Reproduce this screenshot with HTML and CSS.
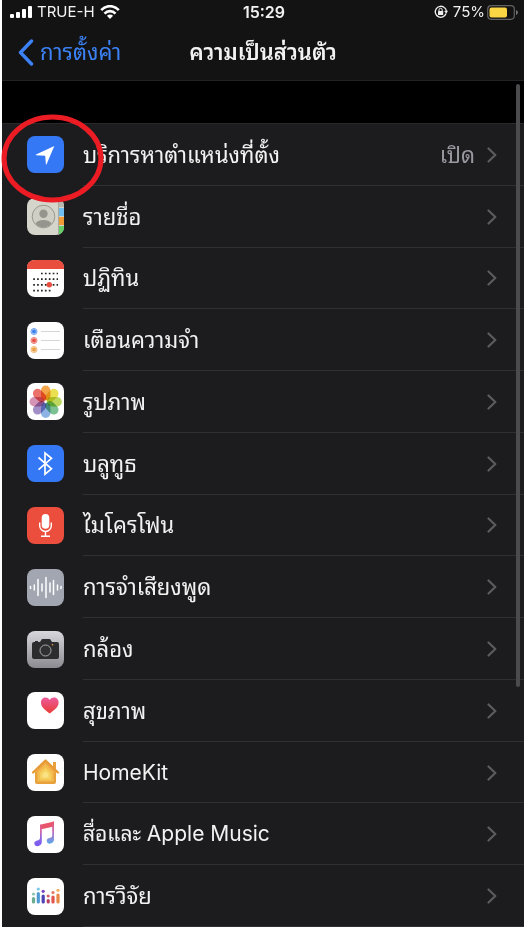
FILE: index.html
```html
<!DOCTYPE html>
<html lang="th">
<head>
<meta charset="utf-8">
<meta name="viewport" content="width=device-width, initial-scale=1">
<title>ความเป็นส่วนตัว</title>
<link rel="stylesheet" href="styles.css">
</head>
<body>
<svg class="defs" width="0" height="0" aria-hidden="true">
  <defs>
    <linearGradient id="camera-bg" x1="0" y1="0" x2="0" y2="1"><stop offset="0" stop-color="#d8d7dc"/><stop offset="1" stop-color="#8c8b91"/></linearGradient>
    <linearGradient id="heart" x1="0" y1="0" x2="0" y2="1"><stop offset="0" stop-color="#ee5a9c"/><stop offset="1" stop-color="#e83c35"/></linearGradient>
    <linearGradient id="music" gradientUnits="userSpaceOnUse" x1="20" y1="6" x2="16" y2="30"><stop offset="0" stop-color="#ea5468"/><stop offset=".4" stop-color="#d765a8"/><stop offset=".75" stop-color="#8565e8"/><stop offset="1" stop-color="#7a5cf0"/></linearGradient>
    <linearGradient id="music-right" gradientUnits="userSpaceOnUse" x1="24" y1="6" x2="24" y2="28"><stop offset="0" stop-color="#ea5468"/><stop offset=".45" stop-color="#c470c0"/><stop offset="1" stop-color="#55a8ee"/></linearGradient>
    <symbol id="chevron" viewBox="0 0 10 16"><path d="M1.500 1.500 8.300 8 1.500 14.500" fill="none" stroke="currentColor" stroke-width="2.200" stroke-linecap="round" stroke-linejoin="round"/></symbol>
  </defs>
</svg>
<div class="screen">
  <header class="header">
    <div class="status">
      <div class="carrier">
        <svg width="22" height="12" viewBox="0 0 22 12" aria-hidden="true"><g fill="#fff"><rect x="0" y="8" width="4" height="4" rx="1"/><rect x="6" y="6" width="4" height="6" rx="1"/><rect x="12" y="3" width="4" height="9" rx="1"/><rect x="18" y="0" width="4" height="12" rx="1"/></g></svg>
        <span>TRUE-H</span>
        <svg width="20" height="14" viewBox="0 0 20 14" aria-hidden="true"><g fill="none" stroke="#fff" stroke-width="2.600"><path d="M1.200 5.200C6-.2 14-.2 18.800 5.200"/><path d="M4.500 8.600C7.600 5.300 12.400 5.300 15.500 8.600"/></g><path d="M6.900 10.800Q10 8 13.100 10.800L10 14Z" fill="#fff"/></svg>
      </div>
      <time class="time">15:29</time>
      <div class="power">
        <svg width="14" height="14" viewBox="0 0 14 14" aria-hidden="true"><path d="M10.600 2.800A5.500 5.500 0 1 0 12 8.500" fill="none" stroke="#eee" stroke-width="1.300"/><path d="M10.600 2.800Q12.200 4.200 12.300 6" fill="none" stroke="#eee" stroke-width="1.300"/><path d="m10.200 6 3.800-.2-1.700 3z" fill="#eee"/><rect x="4" y="6" width="5.200" height="4" rx=".6" fill="#eee"/><path d="M5 6.200V4.900a1.600 1.600 0 0 1 3.200 0v1.300" fill="none" stroke="#eee"/></svg>
        <span class="percent">75%</span>
        <svg width="31" height="15" viewBox="0 0 31 15" aria-hidden="true"><rect x=".7" y=".7" width="26.600" height="13.600" rx="3.500" fill="none" stroke="#626262" stroke-width="1.200"/><rect x="2.500" y="2.500" width="17.500" height="10" rx="2" fill="#fbd644"/><path d="M29 5q2 .8 2 2.500T29 10z" fill="#727272"/></svg>
      </div>
    </div>
    <nav class="nav">
      <a class="back" href="#settings"><svg width="16" height="27" viewBox="0 0 16 27" aria-hidden="true"><path d="M13.500 2 2.500 13.500 13.500 25" fill="none" stroke="currentColor" stroke-width="3.400" stroke-linecap="round" stroke-linejoin="round"/></svg><span>การตั้งค่า</span></a>
      <h1 class="title">ความเป็นส่วนตัว</h1>
    </nav>
  </header>
  <main class="content">
    <ul class="list">
      <li class="row">
        <a class="link" href="#location">
          <svg class="icon" viewBox="0 0 37 37" aria-hidden="true"><rect width="37" height="37" rx="8" fill="#3478f6"/><path d="M27.300 10 19.600 28.200Q19.200 29 18.900 28.200L18.200 19.800 9.200 19.200Q8.300 19 9 18.500Z" fill="#fff"/></svg>
          <span class="label">บริการหาตำแหน่งที่ตั้ง</span><span class="value">เปิด</span>
          <svg class="chevron"><use href="#chevron"/></svg>
        </a>
        <svg class="marker" viewBox="0 0 102 88" aria-hidden="true"><ellipse cx="51" cy="44" rx="48" ry="41" fill="none" stroke="#ec1c24" stroke-width="5"/></svg>
      </li>
      <li class="row"><a class="link" href="#contacts">
        <svg class="icon" viewBox="0 0 37 37" aria-hidden="true"><rect width="37" height="37" rx="8" fill="#d6d5cb"/><path d="M32 .6Q37 2.500 37 8V9H32Z" fill="#b8b8ae"/><path d="M32 10h5v8h-5z" fill="#70bdf0"/><path d="M32 19h5v8h-5z" fill="#f09a38"/><path d="M32 28h5v1q0 5.500-5 7.400z" fill="#68ce67"/><path d="M31.500 .6v35.800" stroke="#aaa99f"/><circle cx="16.500" cy="18.500" r="11.300" fill="#d0cfc5" stroke="#99988f"/><circle cx="16.500" cy="15.700" r="4.200" fill="#96958d"/><path d="M8.500 25.500Q10.500 22 16.500 22t8 3.500Q21.500 29.300 16.500 29.300T8.500 25.500Z" fill="#96958d"/></svg>
        <span class="label">รายชื่อ</span><svg class="chevron"><use href="#chevron"/></svg></a></li>
      <li class="row"><a class="link" href="#calendar">
        <svg class="icon" viewBox="0 0 37 37" aria-hidden="true"><rect width="37" height="37" rx="8" fill="#fff"/><path d="M0 9V8Q0 0 8 0H29Q37 0 37 8V9Z" fill="#e84d3d"/><g fill="none" stroke="#222" stroke-width="1.700" stroke-dasharray="1.700 2.200"><path d="M14 13.500H31"/><path d="M6.200 19.200H31"/><path d="M6.200 24.800H31"/><path d="M6.200 30.700H23.500"/></g><circle cx="22.300" cy="24.800" r="2.700" fill="#e84d3d"/></svg>
        <span class="label">ปฏิทิน</span><svg class="chevron"><use href="#chevron"/></svg></a></li>
      <li class="row"><a class="link" href="#reminders">
        <svg class="icon" viewBox="0 0 37 37" aria-hidden="true"><rect width="37" height="37" rx="8" fill="#fff"/><path d="M14 9.500H33M14 18.500H33M14 27.500H33" stroke="#c9cccf" stroke-width=".8"/><g fill="none" stroke-width=".8"><g stroke="#3f83ee"><circle cx="7" cy="9.500" r="3"/><circle cx="7" cy="9.500" r="1.800" fill="#3f83ee"/></g><g stroke="#e85045"><circle cx="7" cy="18.500" r="3"/><circle cx="7" cy="18.500" r="1.800" fill="#e85045"/></g><g stroke="#eea044"><circle cx="7" cy="27.500" r="3"/><circle cx="7" cy="27.500" r="1.800" fill="#eea044"/></g></g></svg>
        <span class="label">เตือนความจำ</span><svg class="chevron"><use href="#chevron"/></svg></a></li>
      <li class="row"><a class="link" href="#photos">
        <svg class="icon" viewBox="0 0 37 37" aria-hidden="true"><rect width="37" height="37" rx="8" fill="#fff"/><g class="petals"><rect x="14" y="2.500" width="9.400" height="15" rx="4.700" fill="#f29c38"/><rect x="14" y="2.500" width="9.400" height="15" rx="4.700" fill="#e8dc3c" transform="rotate(45 18.700 18.700)"/><rect x="14" y="2.500" width="9.400" height="15" rx="4.700" fill="#b7d34d" transform="rotate(90 18.700 18.700)"/><rect x="14" y="2.500" width="9.400" height="15" rx="4.700" fill="#6cba85" transform="rotate(135 18.700 18.700)"/><rect x="14" y="2.500" width="9.400" height="15" rx="4.700" fill="#80abe0" transform="rotate(180 18.700 18.700)"/><rect x="14" y="2.500" width="9.400" height="15" rx="4.700" fill="#9883c2" transform="rotate(225 18.700 18.700)"/><rect x="14" y="2.500" width="9.400" height="15" rx="4.700" fill="#d188ad" transform="rotate(270 18.700 18.700)"/><rect x="14" y="2.500" width="9.400" height="15" rx="4.700" fill="#e8625a" transform="rotate(315 18.700 18.700)"/></g></svg>
        <span class="label">รูปภาพ</span><svg class="chevron"><use href="#chevron"/></svg></a></li>
      <li class="row"><a class="link" href="#bluetooth">
        <svg class="icon" viewBox="0 0 37 37" aria-hidden="true"><rect width="37" height="37" rx="8" fill="#3478f6"/><path d="m11.500 12.500 13 11.300-6.500 5.400V8l6.500 5.300-13 11.300" fill="none" stroke="#fff" stroke-width="1.700"/></svg>
        <span class="label">บลูทูธ</span><svg class="chevron"><use href="#chevron"/></svg></a></li>
      <li class="row"><a class="link" href="#microphone">
        <svg class="icon" viewBox="0 0 37 37" aria-hidden="true"><rect width="37" height="37" rx="8" fill="#eb4e3d"/><rect x="14.700" y="7" width="7.600" height="14.700" rx="3.800" fill="#fff"/><path d="M12.700 15.500v3.200a5.800 5.800 0 0 0 11.600 0v-3.200M18.500 24.500v4.700M14 29.300h9" fill="none" stroke="#fff" stroke-width="1.400"/></svg>
        <span class="label">ไมโครโฟน</span><svg class="chevron"><use href="#chevron"/></svg></a></li>
      <li class="row"><a class="link" href="#speech">
        <svg class="icon" viewBox="0 0 37 37" aria-hidden="true"><rect width="37" height="37" rx="8" fill="#a2a6b1"/><path d="M3.500 17.500v2M7.300 16v5M11 10.500v16M15 15v7M19 8.500v20M23 14v9M26.500 11.500v14M30.500 16v5M34 17.500v2" stroke="#fff" stroke-width="1.500" stroke-linecap="round"/></svg>
        <span class="label">การจำเสียงพูด</span><svg class="chevron"><use href="#chevron"/></svg></a></li>
      <li class="row"><a class="link" href="#camera">
        <svg class="icon" viewBox="0 0 37 37" aria-hidden="true"><rect width="37" height="37" rx="8" fill="url(#camera-bg)"/><path d="M8 10h3v1h2l2-3h8l2 3h5q2 0 2 2v13q0 2-2 2H7q-2 0-2-2V13q0-2 2-2h1z" fill="#2c2c2e"/><circle cx="18.500" cy="19.500" r="5.500" fill="#303032" stroke="#b5b5b5" stroke-width=".9"/><circle cx="25.500" cy="13.700" r=".8" fill="#f2a33c"/></svg>
        <span class="label">กล้อง</span><svg class="chevron"><use href="#chevron"/></svg></a></li>
      <li class="row"><a class="link" href="#health">
        <svg class="icon" viewBox="0 0 37 37" aria-hidden="true"><rect width="37" height="37" rx="8" fill="#fff"/><path d="M22.700 21.500C17 17.300 14 14.500 14 10.500c0-5.500 6.300-6.700 8.700-2.500 2.400-4.200 8.900-3 8.900 2.500 0 4-3.200 6.800-8.900 11Z" fill="url(#heart)"/></svg>
        <span class="label">สุขภาพ</span><svg class="chevron"><use href="#chevron"/></svg></a></li>
      <li class="row"><a class="link" href="#homekit">
        <svg class="icon" viewBox="0 0 37 37" aria-hidden="true"><rect width="37" height="37" rx="8" fill="#fff"/><path d="M26 8h3v7h-3z" fill="#e9a13b"/><path d="M8 17h21v11q0 2-2 2H10q-2 0-2-2Z" fill="#e9a13b"/><path d="m6 18.500 12.500-12 12.500 12" fill="#f0a944" stroke="#e69a38" stroke-width="2.200" stroke-linejoin="round" stroke-linecap="round"/><path d="m10.500 18 8-7.800 8 7.800v9.500h-16z" fill="#f4bd52"/><path d="m13 19 5.500-5.300L24 19v6.500H13z" fill="#f6d160"/><path d="m15.500 20 3-2.800 3 2.800v3.500h-6z" fill="#f9e384"/></svg>
        <span class="label latin">HomeKit</span><svg class="chevron"><use href="#chevron"/></svg></a></li>
      <li class="row"><a class="link" href="#music">
        <svg class="icon" viewBox="0 0 37 37" aria-hidden="true"><rect width="37" height="37" rx="8" fill="#fff"/><path d="M13 8.700 27 5.500v5L13 13.500Z" fill="#e7566c"/><path d="M13 8.700h1.800V26c0 5-7.500 5.500-7.500 1.300 0-3.700 5.700-1.800 5.700-5.300Z" fill="url(#music)"/><path d="M25.200 6 27 5.500V23.500c0 5-7.300 5.500-7.300 1.300 0-3.700 5.500-2 5.500-5.300Z" fill="url(#music-right)"/></svg>
        <span class="label latin">สื่อและ Apple Music</span><svg class="chevron"><use href="#chevron"/></svg></a></li>
      <li class="row"><a class="link" href="#research">
        <svg class="icon" viewBox="0 0 37 37" aria-hidden="true"><rect width="37" height="37" rx="8" fill="#fff"/><g fill="none" stroke-width="3.200" stroke-linecap="round"><path d="M6.500 20.500v3.500" stroke="#6aad91"/><path d="M6.500 16h0" stroke="#8dc3b0"/><path d="M11.300 15.500v8.500" stroke="#519bd5"/><path d="M11.300 11h0" stroke="#78c8ea"/><path d="M16.200 18v6" stroke="#4e43b6"/><path d="M16.200 13.300h0" stroke="#7d42bd"/><path d="M21.200 22.500v1.500" stroke="#b64264"/><path d="M21.200 18h0" stroke="#d4626c"/><path d="M26 19v5" stroke="#e2554c"/><path d="M26 14.500h0" stroke="#e57760"/><path d="M31 17v7" stroke="#e98745"/><path d="M31 12.300h0" stroke="#f2b263"/></g></svg>
        <span class="label">การวิจัย</span><svg class="chevron"><use href="#chevron"/></svg></a></li>
    </ul>
  </main>
  <div class="scrollbar" aria-hidden="true"></div>
</div>
</body>
</html>
```
FILE: styles.css
```css
* { box-sizing: border-box; }

body {
  margin: 0;
  background: #fff;
  color: #f2f2f2;
  font-family: Inter, "Noto Sans Thai Looped", "Loma", "Noto Looped Thai", "Garuda", "Noto Sans Thai", sans-serif;
  font-size: 22px;
  line-height: 30px;
}

.defs { position: absolute; }

.screen {
  position: relative;
  display: flex;
  flex-direction: column;
  min-height: 100vh;
  padding: 0 0 1px 2px;
}

.header {
  background: #131313;
  border-bottom: 1px solid #222224;
}

.status {
  display: grid;
  grid-template-columns: 1fr auto 1fr;
  align-items: center;
  height: 24px;
  padding: 0 6px 0 8px;
  font-size: 15px;
  line-height: 24px;
}

.carrier, .power {
  display: flex;
  align-items: center;
  gap: 5px;
}

.power { justify-content: flex-end; }
.percent { margin-right: -3px; }
.time { font-size: 16px; font-weight: 600; }

.nav {
  display: grid;
  grid-template-columns: 1fr auto 1fr;
  align-items: center;
  height: 56px;
  padding: 0 16px;
}

.back {
  display: flex;
  align-items: center;
  gap: 6px;
  color: #3c82f6;
  text-decoration: none;
}

.title {
  margin: 0;
  font-size: 22px;
  font-weight: 600;
}

.content {
  display: flex;
  flex: 1;
  flex-direction: column;
  padding-top: 42px;
  background: #000;
}

.list {
  display: grid;
  flex: 1;
  grid-auto-rows: 1fr;
  margin: 0;
  padding: 0;
  border-top: 1px solid #29292b;
  background: #1c1c1e;
  list-style: none;
}

.row {
  position: relative;
  display: grid;
  min-height: 48px;
}

.link {
  display: grid;
  grid-template-columns: 37px 1fr auto 10px;
  align-items: center;
  column-gap: 19px;
  padding: 0 27px 0 25px;
  color: inherit;
  text-decoration: none;
}

.row::after {
  position: absolute;
  right: 0;
  bottom: 0;
  left: 81px;
  height: 1px;
  background: #303032;
  content: "";
}

.icon {
  width: 37px;
  height: 37px;
}

.petals rect { mix-blend-mode: multiply; opacity: 0.9; }

.label { white-space: nowrap; }
.latin { font-size: 21px; }
.value { margin-right: -7px; color: #98989f; }

.chevron {
  grid-column: 4;
  width: 10px;
  height: 16px;
  color: #5b5b60;
}

.marker {
  position: absolute;
  top: -10px;
  left: -1px;
  z-index: 1;
  width: 103px;
  height: 89px;
}

.scrollbar {
  position: absolute;
  top: 9%;
  right: 4px;
  width: 4px;
  height: 65%;
  border-radius: 2px;
  background: #4b4b4d;
}
```
